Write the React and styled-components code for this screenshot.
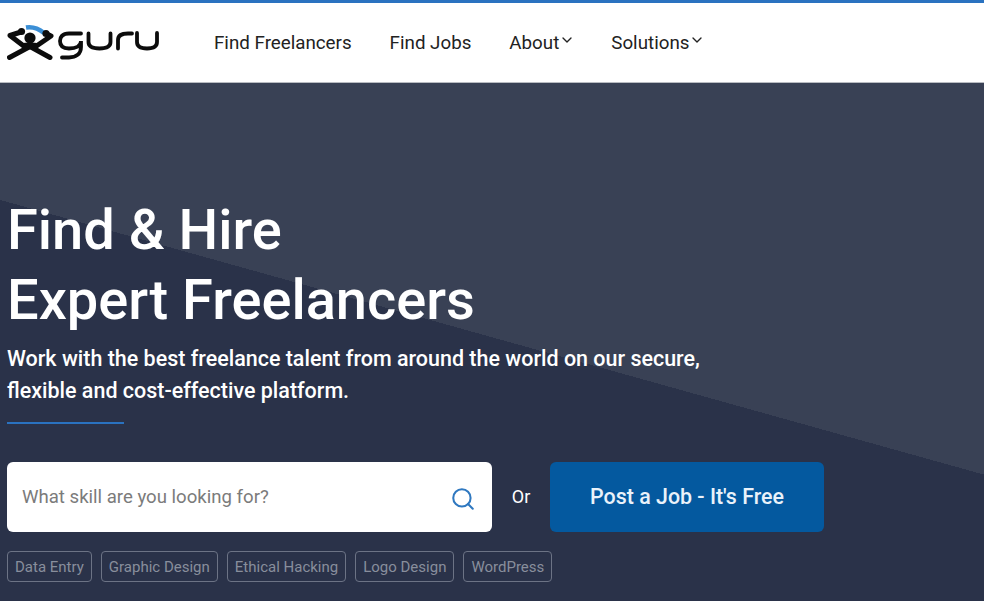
import React from 'react';
import styled, { createGlobalStyle } from 'styled-components';
import { Search, ChevronDown } from 'lucide-react';

const tags = ['Data Entry', 'Graphic Design', 'Ethical Hacking', 'Logo Design', 'WordPress'];

export default function App() {
	return (
		<>
			<GlobalStyle />
			<Page>
				<Header>
					<Logo />
					<Nav>
						<NavLink>Find Freelancers</NavLink>
						<NavLink>Find Jobs</NavLink>
						<NavLink>
							About
							<ChevronDown size={16} strokeWidth={2} />
						</NavLink>
						<NavLink>
							Solutions
							<ChevronDown size={16} strokeWidth={2} />
						</NavLink>
					</Nav>
				</Header>
				<Hero>
					<Title>
						Find &amp; Hire
						<br />
						Expert Freelancers
					</Title>
					<Lead>
						Work with the best freelance talent from around the world on our secure,
						<br />
						flexible and cost-effective platform.
					</Lead>
					<Rule />
					<Actions>
						<SearchBox>
							<SearchInput placeholder="What skill are you looking for?" />
							<Search size={26} strokeWidth={1.9} color="#2f78c0" />
						</SearchBox>
						<Or>Or</Or>
						<PostButton>Post a Job - It's Free</PostButton>
					</Actions>
					<Tags>
						{tags.map((tag) => (
							<Tag key={tag}>{tag}</Tag>
						))}
					</Tags>
				</Hero>
			</Page>
		</>
	);
}

// viewBox uses page coordinates, so the logo strokes read like the screenshot
function Logo() {
	return (
		<LogoSvg viewBox="7 22 152 42" width="152" height="42" aria-label="guru">
			<path d="M26 27.5 C32 26.5 38.5 28.5 44 33" fill="none" stroke="#3b8fd6" strokeWidth="4.6" />
			<circle cx="30" cy="38" r="5.6" fill="#0c0c0c" />
			<g fill="none" stroke="#0c0c0c" strokeLinejoin="round" strokeLinecap="round">
				<path d="M21 32 L10 35.5 L25 47 M46 33.5 L51 36 L35 47" strokeWidth="5" />
				<path d="M9.5 57.5 L30 46.5 L50 57.5" strokeWidth="5" />
				<path d="M25 46 L35 46" strokeWidth="6.5" />
			</g>
			<circle cx="21.5" cy="31.5" r="3.6" fill="#0c0c0c" />
			<circle cx="46" cy="33.5" r="3.6" fill="#0c0c0c" />
			<g fill="none" stroke="#0c0c0c" strokeWidth="3.8" strokeLinecap="round">
				<path d="M81 33.5 H69 C62 33.5 60 37.5 60 41 C60 46 63 48.5 69 48.5 C76 48.5 81 46 81 41 V47 C81 54 76 57.5 69 57.5 H62" />
				<path d="M88.5 33.5 V42 C88.5 47 92.5 48.5 99.5 48.5 C106.5 48.5 110.5 47 110.5 42 V33.5" />
				<path d="M118 48.5 V40 C118 35.5 122 33.5 128 33.5 H132" />
				<path d="M137 33 V42 C137 47 141 48.5 147 48.5 C153 48.5 157 47 157 42 V33" />
			</g>
		</LogoSvg>
	);
}

// Styles

const GlobalStyle = createGlobalStyle`
	html, body {
		margin: 0;
		padding: 0;
		background: #2a3249;
	}
	body {
		font-family: Roboto, "Liberation Sans", sans-serif;
	}
`;

const Page = styled.div`
	width: 984px;
	height: 601px;
	overflow: hidden;
	display: flex;
	flex-direction: column;
`;

const Header = styled.header`
	height: 79px;
	flex: none;
	box-sizing: content-box;
	border-top: 3px solid #2a72c0;
	border-bottom: 1px solid #b9bcc2;
	background: #fff;
	display: flex;
	align-items: center;
	padding-left: 7px;
`;

const LogoSvg = styled.svg`
	flex: none;
	margin-top: 1px;
`;

const Nav = styled.nav`
	display: flex;
	align-items: center;
	gap: 38px;
	margin-left: 55px;
`;

const NavLink = styled.a`
	display: flex;
	align-items: center;
	font-size: 18.75px;
	color: #222;
	svg {
		margin: -6px -2px 0 0;
	}
`;

const Hero = styled.main`
	flex: 1;
	padding: 112px 0 0 7px;
	background: linear-gradient(195.6deg, #394155 0, #394155 49.4%, #2a3249 49.4%, #2a3249 100%);
`;

const Title = styled.h1`
	margin: 0;
	font-size: 56px;
	line-height: 70px;
	font-weight: 500;
	color: #fff;
`;

const Lead = styled.p`
	margin: 8px 0 0;
	font-size: 21.47px;
	line-height: 32px;
	font-weight: 500;
	color: #fff;
`;

const Rule = styled.div`
	width: 117px;
	height: 2px;
	margin-top: 15px;
	background: #2a72c0;
`;

const Actions = styled.div`
	display: flex;
	align-items: center;
	margin-top: 38px;
`;

const SearchBox = styled.div`
	width: 485px;
	height: 70px;
	box-sizing: border-box;
	padding: 0 16px 0 15px;
	display: flex;
	align-items: center;
	background: #fff;
	border-radius: 6px;
	svg {
		flex: none;
		margin-top: 4px;
	}
`;

const SearchInput = styled.input`
	flex: 1;
	min-width: 0;
	border: 0;
	outline: 0;
	padding: 0;
	font: 400 18.6px Roboto, sans-serif;
	color: #333;
	&::placeholder {
		color: #7b7b7b;
		opacity: 1;
	}
`;

const Or = styled.span`
	width: 58px;
	margin-top: -2px;
	text-align: center;
	font-size: 18px;
	color: #fff;
`;

const PostButton = styled.button`
	width: 274px;
	height: 70px;
	padding: 0 0 2px;
	border: 0;
	border-radius: 6px;
	background: #04599f;
	color: #eaf2fa;
	font: 500 21.4px Roboto, sans-serif;
`;

const Tags = styled.div`
	display: flex;
	gap: 9px;
	margin-top: 19px;
`;

const Tag = styled.span`
	height: 31px;
	box-sizing: border-box;
	padding: 0 7px;
	display: flex;
	align-items: center;
	border: 1px solid #6c7385;
	border-radius: 4px;
	font-size: 15px;
	color: #888e9c;
`;
